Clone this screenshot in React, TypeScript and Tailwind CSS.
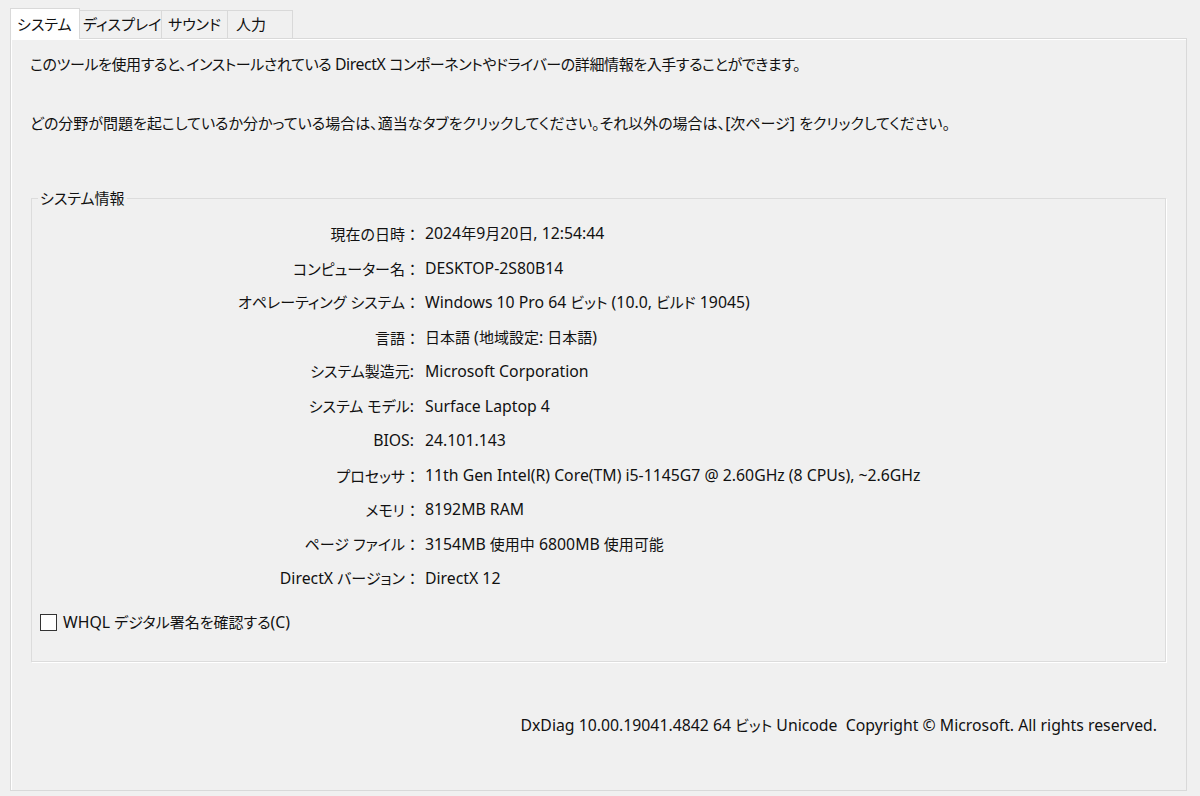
import React from "react";

const rows: [string, string][] = [
  ["現在の日時：", "2024年9月20日, 12:54:44"],
  ["コンピューター名：", "DESKTOP-2S80B14"],
  ["オペレーティング システム：", "Windows 10 Pro 64 ビット (10.0, ビルド 19045)"],
  ["言語：", "日本語 (地域設定: 日本語)"],
  ["システム製造元:", "Microsoft Corporation"],
  ["システム モデル:", "Surface Laptop 4"],
  ["BIOS:", "24.101.143"],
  ["プロセッサ：", "11th Gen Intel(R) Core(TM) i5-1145G7 @ 2.60GHz (8 CPUs), ~2.6GHz"],
  ["メモリ：", "8192MB RAM"],
  ["ページ ファイル：", "3154MB 使用中 6800MB 使用可能"],
  ["DirectX バージョン：", "DirectX 12"],
];

function T({ s }: { s: string }) {
  const parts = s.split(/([\u0020-\u024F\u00A9]+|：)/).filter((p) => p.length > 0);
  return (
    <>
      {parts.map((p, i) =>
        p === "：" ? (
          <span key={i} className="[font-feature-settings:normal] mr-[-6px]">
            {p}
          </span>
        ) : /^[\u0020-\u024F\u00A9]+$/.test(p) ? (
          <span key={i} className="text-[15.8px]">
            {p}
          </span>
        ) : (
          <span key={i}>{p}</span>
        )
      )}
    </>
  );
}

export default function App() {
  return (
    <div className="w-[1200px] h-[796px] overflow-hidden bg-[#f0f0f0] pt-[8px] pl-[10px] pr-[13px] pb-[5px] flex flex-col text-[15px] text-[#111] font-['Noto_Sans','Noto_Sans_CJK_JP',sans-serif] [font-feature-settings:'palt']">
      {/* Tabs */}
      <div className="flex items-end h-[30px] relative z-10 whitespace-nowrap">
        <div className="h-[31px] w-[70px] bg-white border border-b-0 border-[#d9d9d9] pl-[6px] flex items-center -mb-px">
          システム
        </div>
        <div className="h-[28px] w-[82px] border-t border-r border-[#d9d9d9] pl-[3px] flex items-center">
          ディスプレイ
        </div>
        <div className="h-[28px] w-[66px] border-t border-r border-[#d9d9d9] pl-[6px] flex items-center">
          サウンド
        </div>
        <div className="h-[28px] w-[65px] border-t border-r border-[#d9d9d9] pl-[8px] flex items-center">
          人力
        </div>
      </div>

      {/* Panel */}
      <div className="flex-1 border border-[#d9d9d9] shadow-[inset_1px_1px_0_#ffffff] pt-[15px] pl-[19px] pr-[20px] flex flex-col">
        <p className="h-[20px] leading-[20px] whitespace-nowrap tracking-[-0.4px]">
          <T s="このツールを使用すると、インストールされている DirectX コンポーネントやドライバーの詳細情報を入手することができます。" />
        </p>
        <p className="h-[20px] leading-[20px] mt-[39px] whitespace-nowrap">
          <T s="どの分野が問題を起こしているか分かっている場合は、適当なタブをクリックしてください。それ以外の場合は、[次ページ] をクリックしてください。" />
        </p>

        <fieldset className="mt-[55px] ml-[1px] border border-[#dcdcdc] shadow-[1px_1px_0_#ffffff] pb-[28px]">
          <legend className="ml-[6px] px-[2px] h-[20px] leading-[20px]">システム情報</legend>
          <div className="pt-[9px] flex flex-col">
            {rows.map(([label, value]) => (
              <div key={label} className="h-[34.5px] flex items-center">
                <div className="w-[382px] text-right whitespace-nowrap">
                  <T s={label} />
                </div>
                <div className="pl-[11px] whitespace-nowrap">
                  <T s={value} />
                </div>
              </div>
            ))}
          </div>
          <label className="mt-[16px] ml-[8px] h-[20px] flex items-center gap-[6px]">
            <span className="w-[17px] h-[17px] border border-[#333] bg-white shrink-0" />
            <span>
              <T s="WHQL デジタル署名を確認する(C)" />
            </span>
          </label>
        </fieldset>

        <div className="mt-[53px] h-[20px] leading-[20px] text-right pr-[9px] whitespace-pre">
          <T s="DxDiag 10.00.19041.4842 64 ビット Unicode  Copyright © Microsoft. All rights reserved." />
        </div>
      </div>
    </div>
  );
}
